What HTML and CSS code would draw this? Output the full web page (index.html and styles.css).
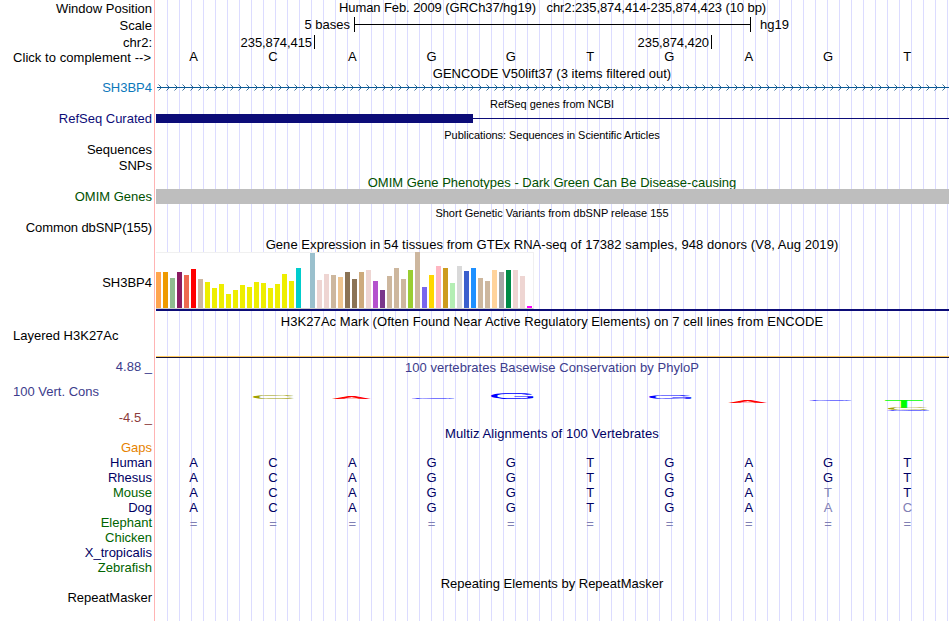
FILE: index.html
```
<!DOCTYPE html>
<html lang="en">
<head>
    <meta charset="UTF-8">
    <meta name="viewport" content="width=device-width, initial-scale=1.0">
    <title>Human chr2:235,874,414-235,874,423</title>
    <link rel="stylesheet" href="styles.css">
</head>
<body>
    <div class="browser">
        <div class="row position">
            <div class="label">Window Position</div>
            <div class="title">Human Feb. 2009 (GRCh37/hg19) &nbsp; chr2:235,874,414-235,874,423 (10 bp)</div>
        </div>
        <div class="row scale">
            <div class="label">Scale</div>
            <div class="scale-track">
                <span class="scale-size">5 bases</span>
                <span class="scale-bar"></span>
                <span class="scale-db">hg19</span>
            </div>
        </div>
        <div class="row ruler">
            <div class="label">chr2:</div>
            <div class="ticks">
                <span class="tick first">235,874,415</span>
                <span class="tick">235,874,420</span>
            </div>
        </div>
        <div class="row sequence">
            <div class="label left">Click to complement --&gt;</div>
            <div class="bases" data-seq="ACAGGTGAGT"></div>
        </div>

        <div class="title gencode">GENCODE V50lift37 (3 items filtered out)</div>
        <div class="row gene">
            <div class="label blue">SH3BP4</div>
            <svg class="intron" width="793" height="16">
                <defs>
                    <pattern id="chevrons" width="8" height="16" patternUnits="userSpaceOnUse">
                        <path d="M2.5 3.5 L5.5 6.5 L2.5 9.5" fill="none" stroke="#0a4a7c" stroke-width="0.8"/>
                    </pattern>
                </defs>
                <rect width="793" height="16" fill="url(#chevrons)"/>
                <rect x="1" y="6" width="792" height="1" fill="#0a5a96"/>
            </svg>
        </div>

        <div class="title small refseq-title">RefSeq genes from NCBI</div>
        <div class="row refseq">
            <div class="label navy">RefSeq Curated</div>
            <div class="exons"><span class="exon"></span><span class="utr"></span></div>
        </div>

        <div class="title small pubs-title">Publications: Sequences in Scientific Articles</div>
        <div class="row pubs"><div class="label">Sequences</div></div>
        <div class="row pubs"><div class="label">SNPs</div></div>

        <div class="title green omim-title">OMIM Gene Phenotypes - Dark Green Can Be Disease-causing</div>
        <div class="row omim">
            <div class="label green">OMIM Genes</div>
            <div class="omim-bar"></div>
        </div>

        <div class="title small snp-title">Short Genetic Variants from dbSNP release 155</div>
        <div class="row snp"><div class="label">Common dbSNP(155)</div></div>

        <div class="title gtex-title">Gene Expression in 54 tissues from GTEx RNA-seq of 17382 samples, 948 donors (V8, Aug 2019)</div>
        <div class="row gtex">
            <div class="label">SH3BP4</div>
            <div class="gtex-track"><div class="gtex-bars" id="gtexBars"></div></div>
        </div>

        <div class="title h3k-title">H3K27Ac Mark (Often Found Near Active Regulatory Elements) on 7 cell lines from ENCODE</div>
        <div class="row h3k">
            <div class="label left">Layered H3K27Ac</div>
            <div class="h3k-line"></div>
        </div>

        <div class="row phylop">
            <div class="phylop-labels">
                <div class="label cons">4.88 _</div>
                <div class="label left cons">100 Vert. Cons</div>
                <div class="label maroon">-4.5 _</div>
            </div>
            <div class="phylop-track">
                <div class="track-title cons">100 vertebrates Basewise Conservation by PhyloP</div>
                <svg class="logo" id="logo" width="793" height="40"></svg>
            </div>
        </div>

        <div class="title multiz multiz-title">Multiz Alignments of 100 Vertebrates</div>
        <div class="row species"><div class="label orange">Gaps</div></div>
        <div class="row species"><div class="label multiz">Human</div><div class="bases multiz" data-seq="ACAGGTGAGT"></div></div>
        <div class="row species"><div class="label multiz">Rhesus</div><div class="bases multiz" data-seq="ACAGGTGAGT"></div></div>
        <div class="row species"><div class="label leaf">Mouse</div><div class="bases multiz" data-seq="ACAGGTGAtT"></div></div>
        <div class="row species"><div class="label multiz">Dog</div><div class="bases multiz" data-seq="ACAGGTGAac"></div></div>
        <div class="row species"><div class="label leaf">Elephant</div><div class="bases multiz" data-seq="=========="></div></div>
        <div class="row species"><div class="label leaf">Chicken</div></div>
        <div class="row species"><div class="label multiz">X_tropicalis</div></div>
        <div class="row species"><div class="label leaf">Zebrafish</div></div>

        <div class="title repeat-title">Repeating Elements by RepeatMasker</div>
        <div class="row repeat"><div class="label">RepeatMasker</div></div>
    </div>

    <script>
        // lower case bases and "=" are drawn faded
        document.querySelectorAll('.bases').forEach(row => {
            for (const base of row.dataset.seq) {
                const cell = document.createElement('span');
                cell.className = 'base';
                if (base === '=') cell.classList.add('faded', 'gap');
                else if (base !== base.toUpperCase()) cell.classList.add('faded');
                cell.textContent = base.toUpperCase();
                row.appendChild(cell);
            }
        });

        // GTEx tissues: [height, color]
        const tissues = [
            [36, '#ffa54f'], [36, '#ee9a00'], [30, '#8fbc8f'], [36, '#8b1c62'], [33, '#ee6a50'],
            [39, '#ff0000'], [29, '#cdb79e'], [26, '#eeee00'], [20, '#eeee00'], [24, '#eeee00'],
            [14, '#eeee00'], [18, '#eeee00'], [23, '#eeee00'], [21, '#eeee00'], [26, '#eeee00'],
            [25, '#eeee00'], [20, '#eeee00'], [24, '#eeee00'], [34, '#eeee00'], [27, '#eeee00'],
            [40, '#00cdcd'], [0, '#ee82ee'], [55, '#9ac0cd'], [28, '#eed5d2'], [34, '#eed5d2'],
            [33, '#cdb79e'], [31, '#eec591'], [36, '#8b7355'], [29, '#8b7355'], [36, '#cdaa7d'],
            [38, '#eed5d2'], [27, '#b452cd'], [18, '#7a378b'], [32, '#cdb79e'], [40, '#cdb79e'],
            [29, '#cdb79e'], [38, '#9acd32'], [56, '#cdb79e'], [21, '#7a67ee'], [33, '#ffd700'],
            [42, '#ffb6c1'], [40, '#cd9b1d'], [25, '#b4eeb4'], [42, '#d9d9d9'], [37, '#3a5fcd'],
            [40, '#1e90ff'], [30, '#cdb79e'], [27, '#cdb79e'], [38, '#ffd39b'], [36, '#a6a6a6'],
            [38, '#008b45'], [38, '#eed5d2'], [32, '#eed5d2'], [2, '#ff00ff']
        ];
        const gtexBars = document.getElementById('gtexBars');
        tissues.forEach(([height, color]) => {
            const bar = document.createElement('span');
            bar.className = 'bar';
            bar.style.height = height + 'px';
            bar.style.background = color;
            gtexBars.appendChild(bar);
        });

        // conservation letters stretched into boxes: [base, x, top, width, height, color]
        const letters = [
            ['C', 97, 14.8, 41, 4.2, '#a0a000'],
            ['A', 176, 17, 39, 2, '#ff0000'],
            ['G', 256, 17.8, 43, 1.2, '#0000ff'],
            ['G', 335, 12.8, 43, 6.2, '#0000ff'],
            ['G', 493, 15.5, 43, 3.5, '#0000ff'],
            ['A', 572, 20, 39, 3, '#ff0000'],
            ['G', 653, 20, 43, 1, '#0000ff'],
            ['T', 729, 20, 38, 8, '#00ff00'],
            ['C', 732, 28, 40, 2, '#a0a000'],
            ['G', 731, 30, 43, 1, '#0000ff']
        ];
        // glyph boxes at 100px: left, right, top, bottom
        const glyphs = {
            A: [0.2, 66.5, 68.8, 0],
            C: [5, 68.3, 69.8, 1],
            G: [5, 71.6, 69.8, 1],
            T: [2.2, 59, 68.8, 0]
        };
        const logo = document.getElementById('logo');
        letters.forEach(([base, x, top, width, height, color]) => {
            const [left, right, up, down] = glyphs[base];
            const sx = width / (right - left);
            const sy = height / (up + down);
            const text = document.createElementNS('http://www.w3.org/2000/svg', 'text');
            text.setAttribute('transform', `translate(${x - left * sx} ${top + up * sy}) scale(${sx} ${sy})`);
            text.setAttribute('fill', color);
            text.textContent = base;
            logo.appendChild(text);
        });
    </script>
</body>
</html>
```
FILE: styles.css
```
body {
    margin: 0;
    background: #fff;
    font-family: "Liberation Sans", Arial, sans-serif;
    font-size: 13px;
    line-height: 16px;
    color: #000;
}
.browser {
    width: 949px;
    height: 621px;
    overflow: hidden;
    background:
        linear-gradient(#ffb4b4, #ffb4b4) 154px 0 / 1px 100% no-repeat,
        repeating-linear-gradient(90deg, #dcdcff 0 1px, transparent 1px 12px) 167px 0 / 782px 100% no-repeat;
}
.row {
    display: grid;
    grid-template-columns: 152px 793px;
    column-gap: 4px;
}
.label {
    text-align: right;
    white-space: nowrap;
}
.label.left {
    text-align: left;
    padding-left: 13px;
}
.title {
    margin-left: 155px;
    text-align: center;
    white-space: nowrap;
}
.row .title {
    margin-left: 0;
    line-height: 15px;
}
.small {
    font-size: 11px;
}
.blue { color: #0c78bb; }
.navy { color: #0c0c78; }
.green { color: #005000; }
.leaf { color: #006400; }
.multiz { color: #000064; }
.cons { color: #3c3c8c; }
.maroon { color: #8c3c3c; }
.orange { color: #e68200; }

.position {
    height: 17px;
}
.position .title {
    letter-spacing: -0.085px;
}
.position .label,
.scale .label {
    padding-top: 1px;
}
.scale {
    height: 17px;
}
.scale-track {
    display: flex;
    height: 15px;
}
.scale-size {
    width: 194px;
    padding-right: 4px;
    text-align: right;
}
.scale-bar {
    width: 395px;
    border-left: 1px solid #000;
    border-right: 1px solid #000;
    background: linear-gradient(#000, #000) 0 7px / 100% 1px no-repeat;
}
.scale-db {
    margin-left: 9px;
}
.ruler {
    height: 15px;
}
.ticks {
    display: flex;
    letter-spacing: -0.08px;
}
.tick {
    box-sizing: border-box;
    width: 397px;
    height: 14px;
    padding-right: 2px;
    border-right: 1px solid #000;
    text-align: right;
}
.tick.first {
    width: 159px;
}
.ruler .label,
.ticks {
    padding-top: 1px;
}
.sequence {
    height: 17px;
}
.sequence .label {
    padding-top: 1px;
    letter-spacing: 0.05px;
}
.bases {
    display: grid;
    grid-template-columns: repeat(10, 79.3px);
}
.base {
    padding-right: 4px;
    text-align: center;
}
.faded {
    color: #8080b4;
}
.gap {
    padding-top: 1px;
}

.gencode {
    height: 15px;
}
.gene {
    height: 16px;
}
.gene .label {
    line-height: 14px;
}
.refseq-title {
    height: 14px;
    line-height: 15px;
}
.refseq {
    height: 17px;
}
.exons {
    display: flex;
    align-items: center;
    height: 15px;
}
.exon {
    width: 317px;
    height: 9px;
    background: #0c0c78;
}
.utr {
    flex: 1;
    height: 1px;
    background: #0c0c78;
}
.pubs-title {
    height: 14px;
    line-height: 14px;
    letter-spacing: -0.05px;
}
.pubs {
    height: 16px;
}
.omim-title {
    height: 15px;
    line-height: 18px;
}
.omim {
    height: 16px;
}
.omim-bar {
    height: 15px;
    background: #bebebe;
}
.snp-title {
    height: 14px;
}
.snp {
    height: 18px;
}
.snp .label {
    padding-top: 1px;
    letter-spacing: -0.1px;
}
.gtex-title {
    height: 15px;
    letter-spacing: 0.06px;
}
.gtex {
    height: 59px;
    align-items: center;
}
.gtex .label {
    padding-top: 2px;
}
.gtex-track {
    border-bottom: 2px solid #0c0c78;
}
.gtex-bars {
    display: flex;
    align-items: flex-end;
    gap: 2px;
    box-sizing: border-box;
    width: 378px;
    height: 57px;
    border: solid #f0f0f0;
    border-width: 1px 1px 0 0;
    border-bottom: 1px solid #ccc;
    background: #fff;
}
.bar {
    width: 5px;
    flex: none;
}
.h3k-title {
    padding-top: 3px;
    height: 14px;
    letter-spacing: 0.055px;
}
.h3k {
    height: 30px;
}
.h3k-line {
    align-self: end;
    height: 1px;
    border-top: 1px solid #ffc85a;
    background: #14143c;
}
.phylop {
    height: 68px;
}
.phylop-labels {
    display: flex;
    flex-direction: column;
    justify-content: space-between;
    box-sizing: border-box;
    height: 68px;
    padding-top: 1px;
}
.phylop-labels .left {
    margin-bottom: 2px;
}
.phylop-track {
    padding-top: 2px;
}
.track-title {
    text-align: center;
    margin-left: -1px;
    letter-spacing: 0.04px;
}
.logo {
    display: block;
    margin-top: 4px;
    font-size: 100px;
}
.multiz-title {
    height: 14px;
    letter-spacing: 0.08px;
}
.species {
    height: 15px;
}
.repeat-title {
    height: 15px;
    line-height: 18px;
}
```
